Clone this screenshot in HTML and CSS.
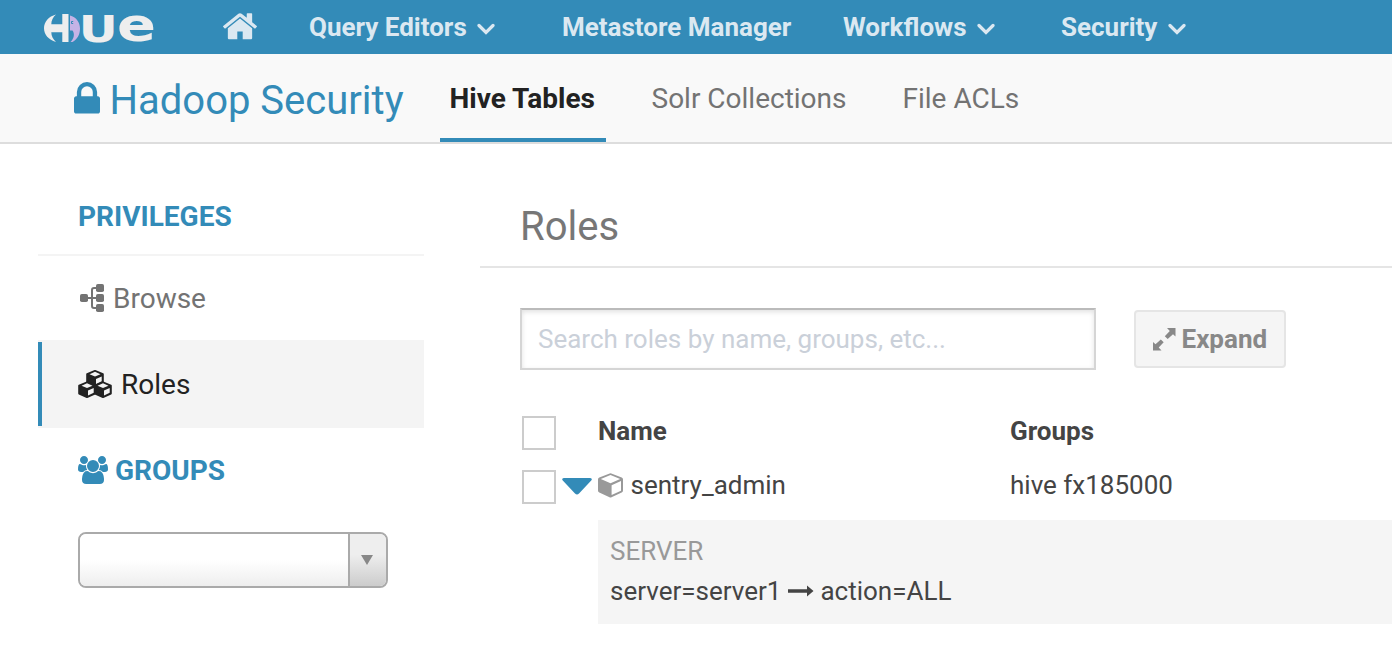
FILE: index.html
```html
<!DOCTYPE html>
<html lang="en">
<head>
<meta charset="utf-8">
<title>Hue - Hadoop Security</title>
<link rel="stylesheet" href="styles.css">
</head>
<body>
<header class="navbar">
  <svg class="logo" width="112" height="54" viewBox="0 -13 112 54">
    <path fill="#eee" d="M12 1.500C4.500 3.500 0 9 0 15.300C0 21.500 4.500 27 12 28.900C9 26.500 7.300 23 7.300 19.300H18.300V29H24.500V1H18.300V11.300H7.300C7.300 7.500 9 4 12 1.500Z"/>
    <path fill="#c5b3e6" d="M26 2.500C32 4 36 9 36 15.500C36 22 33 26.500 28.500 29H26.500C30 25.500 31 21 28.500 17.500H26Z"/>
    <path fill="none" stroke="#338bb8" d="M29.200 8.500H27.500V10.500H29.200"/>
    <text class="logo-text" x="34.800" y="28.600" font-size="37.500" textLength="39" lengthAdjust="spacingAndGlyphs">U</text>
    <text class="logo-text" x="73" y="28.400" font-size="47" textLength="39" lengthAdjust="spacingAndGlyphs">e</text>
  </svg>
  <svg class="home" width="34" height="36.600" viewBox="26 0 1612 1792" preserveAspectRatio="none"><path fill="currentColor" d="M1408 992v480q0 26-19 45t-45 19h-384v-384h-256v384h-384q-26 0-45-19t-19-45v-480q0-1 .5-3t.5-3l575-474 575 474q1 2 1 6zm223-69l-62 74q-8 9-21 11h-3q-13 0-21-7l-692-577-692 577q-12 8-24 7-13-2-21-11l-62-74q-8-10-7-23.500t11-21.500l719-599q32-26 76-26t76 26l244 204v-195q0-14 9-23t23-9h192q14 0 23 9t9 23v408l219 182q10 8 11 21.500t-7 23.500z"/></svg>
  <nav class="menu">
    <a class="menu-item"><span>Query Editors</span><svg class="chev" width="18" height="12" viewBox="0 0 18 12"><path d="M2 2.500L9 9.500L16 2.500"/></svg></a>
    <a class="menu-item"><span>Metastore Manager</span></a>
    <a class="menu-item"><span>Workflows</span><svg class="chev" width="18" height="12" viewBox="0 0 18 12"><path d="M2 2.500L9 9.500L16 2.500"/></svg></a>
    <a class="menu-item"><span>Security</span><svg class="chev" width="18" height="12" viewBox="0 0 18 12"><path d="M2 2.500L9 9.500L16 2.500"/></svg></a>
  </nav>
</header>

<div class="subnav">
  <div class="brand">
    <svg class="lock" width="26" height="31.600" viewBox="0 128 1152 1408" preserveAspectRatio="none"><path fill="currentColor" d="M320 768h512v-192q0-106-75-181t-181-75-181 75-75 181v192zm832 96v576q0 40-28 68t-68 28h-960q-40 0-68-28t-28-68v-576q0-40 28-68t68-28h32v-192q0-184 132-316t316-132 316 132 132 316v192h32q40 0 68 28t28 68z"/></svg>
    <span class="brand-text">Hadoop Security</span>
  </div>
  <div class="tabs">
    <a class="tab active"><span>Hive Tables</span></a>
    <a class="tab solr"><span>Solr Collections</span></a>
    <a class="tab acls"><span>File ACLs</span></a>
  </div>
</div>

<div class="page">
  <aside class="sidebar">
    <div class="side-head"><span>PRIVILEGES</span></div>
    <a class="side-item browse">
      <svg width="24" height="28" viewBox="0 0 24 28" fill="currentColor"><rect y="10" width="8" height="8" rx="1.800"/><rect x="16" width="8" height="8" rx="1.800"/><rect x="16" y="10" width="8" height="8" rx="1.800"/><rect x="16" y="20" width="8" height="8" rx="1.800"/><path fill="none" stroke="currentColor" stroke-width="2" d="M7 14H17M17 4H14Q12 4 12 6V22Q12 24 14 24H17"/></svg>
      <span>Browse</span>
    </a>
    <a class="side-item roles">
      <svg width="34" height="28" viewBox="0 0 34 28">
        <defs><g id="block"><path fill="currentColor" stroke="currentColor" stroke-width="2" stroke-linejoin="round" d="M9 1L16.800 4.200V12L9 15.500L1.200 12V4.200Z"/><path fill="#f4f4f4" d="M9 1.800L14.500 4.200L9 6.600L3.500 4.200ZM10 9L15.700 6.500V11.300L10 13.900Z"/></g></defs>
        <use href="#block" x="8"/><use href="#block" y="11.500"/><use href="#block" x="16" y="11.500"/>
      </svg>
      <span>Roles</span>
    </a>
    <div class="side-groups">
      <svg width="30" height="28" viewBox="0 0 1920 1792"><path fill="currentColor" d="M593 896q-162 5-265 128h-134q-82 0-138-40.500t-56-118.500q0-353 124-353 6 0 43.500 21t97.500 42.500 119 21.500q67 0 133-23-5 37-5 66 0 139 81 256zm1071 637q0 120-73 189.500t-194 69.500h-874q-121 0-194-69.500t-73-189.500q0-53 3.500-103.500t14-109 26.500-108.500 43-97.500 62-81 85.500-53.500 111.500-20q10 0 43 21.500t73 48 107 48 135 21.500 135-21.500 107-48 73-48 43-21.500q61 0 111.500 20t85.500 53.500 62 81 43 97.500 26.500 108.500 14 109 3.500 103.500zm-1024-1277q0 106-75 181t-181 75-181-75-75-181 75-181 181-75 181 75 75 181zm704 384q0 159-112.500 271.500t-271.500 112.500-271.500-112.500-112.500-271.500 112.500-271.500 271.500-112.500 271.500 112.500 112.500 271.500zm576 225q0 78-56 118.500t-138 40.500h-134q-103-123-265-128 81-117 81-256 0-29-5-66 66 23 133 23 59 0 119-21.500t97.500-42.500 43.500-21q124 0 124 353zm-128-609q0 106-75 181t-181 75-181-75-75-181 75-181 181-75 181 75 75 181z"/></svg>
      <span>GROUPS</span>
    </div>
    <div class="select">
      <div class="select-value"></div>
      <div class="select-arrow"><svg width="12" height="10" viewBox="0 0 12 10"><path fill="#888" d="M0 0H12L6 10Z"/></svg></div>
    </div>
  </aside>

  <main class="content">
    <h1 class="title"><span>Roles</span></h1>
    <div class="toolbar">
      <div class="search"><span>Search roles by name, groups, etc...</span></div>
      <div class="button">
        <svg width="23" height="23" viewBox="0 0 23 23"><path fill="currentColor" d="M14 0H22.500V8.500L20 6.300L14.700 11L11.800 8.200L16.800 3ZM8.500 22.500H0V14L2.500 16.200L7.800 11.500L10.700 14.300L5.700 19.500Z"/></svg>
        <span>Expand</span>
      </div>
    </div>
    <div class="table">
      <div class="row head">
        <i class="check"></i>
        <span class="name">Name</span>
        <span class="groups">Groups</span>
      </div>
      <div class="row">
        <i class="check"></i>
        <svg class="caret" width="30" height="18" viewBox="0 0 30 18"><path fill="#338bb8" d="M1.800 0H28.200Q31 .6 29 2.800L17 15.500Q15 17.500 13 15.500L1 2.800Q-1 .6 1.800 0Z"/></svg>
        <span class="name entry"><svg width="25" height="25" viewBox="0 0 25 25"><path fill="#999" fill-rule="evenodd" d="M11.700 .5Q12.500 0 13.300 .5L23.700 4.600Q25 5.200 25 6.500V17.600Q25 18.900 23.700 19.600L13.500 24.200Q12.500 24.700 11.500 24.200L1.300 19.600Q0 18.900 0 17.600V6.500Q0 5.200 1.300 4.600ZM12.500 2.100L2.800 6.100L12.500 10.300L22.200 6.100ZM13.600 12.200V22L23 17.700V8Z"/></svg><span>sentry_admin</span></span>
        <span class="groups">hive fx185000</span>
      </div>
      <div class="detail">
        <div class="detail-type"><span>SERVER</span></div>
        <div class="detail-rule"><span>server=server1</span><svg width="26" height="12" viewBox="0 0 26 12"><path fill="currentColor" d="M0 4.300H19V.5L25.500 6L19 11.500V7.700H0Z"/></svg><span>action=ALL</span></div>
      </div>
    </div>
  </main>
</div>
</body>
</html>
```

FILE: styles.css
```css
* { box-sizing: border-box; }
body {
  margin: 0;
  background: #fff;
  color: #444;
  font: 26px/40px Roboto, "Liberation Sans", sans-serif;
  white-space: nowrap;
  overflow: hidden;
}
svg { display: block; flex: none; }

.navbar {
  height: 54px;
  display: flex;
  background: #338bb8;
  color: #dbe8f1;
  font-weight: 700;
}
.logo { margin-left: 44px; overflow: visible; }
.logo-text { fill: #eee; font-family: "DejaVu Sans", sans-serif; font-weight: 700; }
.home { margin: 8px 0 0 67px; }
.menu {
  display: grid;
  grid-template-columns: 253px 281px 218px 140px;
  margin-left: 52px;
  height: 54px;
  align-items: center;
}
.menu-item { display: flex; align-items: center; gap: 10.500px; }
.chev { margin-top: 3px; fill: none; stroke: #dbe8f1; stroke-width: 3.200; stroke-linecap: round; }

.subnav {
  height: 90px;
  display: flex;
  background: #f9f9f9;
  border-bottom: 2px solid #ddd;
}
.brand {
  display: flex;
  width: 440px;
  padding: 29px 0 0 74px;
  gap: 9.500px;
  color: #338bb8;
}
.lock { margin-top: -1px; }
.brand-text { font-size: 40px; line-height: 36px; }
.tabs { display: flex; gap: 36px; font-size: 28px; }
.tab { height: 88px; padding: 25px 9.500px 0; color: #737373; }
.tab.active { width: 166px; color: #222; font-weight: 700; border-bottom: 4px solid #338bb8; }
.tab.solr { width: 215px; }

.page { display: flex; gap: 56px; padding-left: 38px; }
.sidebar { width: 386px; flex: none; font-size: 28px; }
.side-head {
  height: 112px;
  padding: 53px 0 0 40px;
  color: #338bb8;
  font-weight: 700;
  border-bottom: 2px solid #f4f4f4;
}
.side-item { display: flex; align-items: center; height: 84px; padding-left: 42px; gap: 9px; color: #737373; }
.side-item span, .side-groups span { padding-top: 2px; }
.side-item.roles {
  height: 88px;
  padding-left: 40px;
  color: #222;
  background: linear-gradient(#338bb8, #338bb8) 0 2px / 4px 84px no-repeat #f4f4f4;
}
.side-groups { display: flex; align-items: center; height: 84px; padding-left: 40px; gap: 7px; color: #338bb8; font-weight: 700; }
.select {
  display: flex;
  width: 310px;
  height: 56px;
  margin: 20px 0 0 40px;
  border: 2px solid #aaa;
  border-radius: 8px;
  overflow: hidden;
}
.select-value { flex: 1; background: linear-gradient(#fff 50%, #eee); }
.select-arrow {
  width: 38px;
  padding: 21px 0 0 11px;
  border-left: 2px solid #aaa;
  background: linear-gradient(#eee 40%, #ccc);
}

.content { flex: 1; }
.title {
  height: 124px;
  margin: 0;
  padding: 63px 0 0 40px;
  border-bottom: 2px solid #e5e5e5;
  color: #777;
  font-size: 40px;
  font-weight: 400;
}
.toolbar { display: flex; align-items: center; gap: 38px; padding: 40px 0 0 40px; }
.search {
  display: flex;
  align-items: center;
  width: 576px;
  height: 62px;
  padding-left: 16px;
  border: 2px solid #d5d5d5;
  border-top-color: #bbb;
  box-shadow: inset 0 2px 5px rgba(0, 0, 0, .12);
  color: #cad0d9;
}
.button {
  display: flex;
  align-items: center;
  width: 152px;
  height: 58px;
  padding-left: 16.500px;
  gap: 6px;
  border: 2px solid #e5e5e5;
  border-radius: 4px;
  background: #f5f5f5;
  color: #888;
  font-weight: 700;
}
.table { padding: 36px 0 0 42px; }
.row { display: grid; grid-template-columns: 40px 36px 412px 1fr; height: 54px; align-items: center; }
.row.head { font-weight: 700; }
.name, .groups { padding-bottom: 4px; }
.name { grid-column: 3; }
.groups { grid-column: 4; }
.check { width: 34px; height: 34px; border: 2px solid #ccc; }
.entry { display: flex; align-items: center; gap: 7.500px; }
.detail { margin: 6px 0 0 76px; height: 104px; padding: 11px 12px; background: #f5f5f5; }
.detail-type { color: #999; }
.detail-rule { display: flex; align-items: center; gap: 7px; }
.detail-rule span + svg { margin-right: -1px; }
```
